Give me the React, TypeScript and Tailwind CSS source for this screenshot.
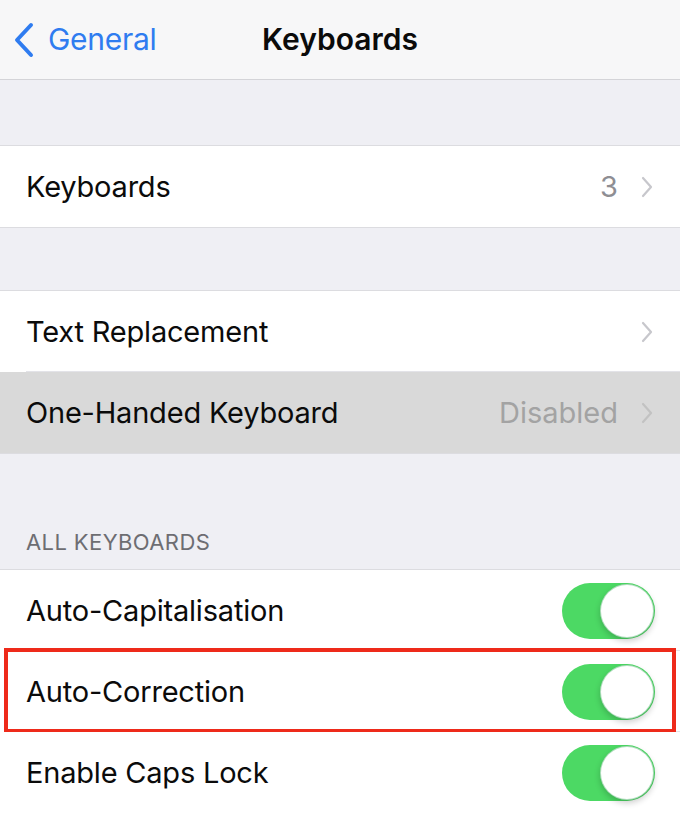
import React from 'react';

function Chevron({ className = '' }: { className?: string }) {
  return (
    <svg width="14" height="24" viewBox="0 0 14 24" className={className} fill="none">
      <path d="M3 3l8 9-8 9" stroke="currentColor" strokeWidth="2.2" strokeLinecap="round" strokeLinejoin="round" />
    </svg>
  );
}

function Toggle() {
  return (
    <div className="relative w-[93px] h-[56px] rounded-full bg-[#4cd964]">
      <div className="absolute right-[1px] top-[1px] w-[54px] h-[54px] rounded-full bg-white border border-[#3aa85a]/40 shadow-[0_3px_6px_rgba(0,0,0,0.2)]" />
    </div>
  );
}

function NavRow({ label, value, highlight, last }: { label: string; value?: string; highlight?: boolean; last?: boolean }) {
  return (
    <div className={`relative flex items-center h-[81px] pl-[26px] pr-[26px] ${highlight ? 'bg-[#d9d9d9]' : 'bg-white'}`}>
      <span className="flex-1 text-[29px] text-[#0b0b0b] tracking-[-0.2px]">{label}</span>
      {value && <span className={`text-[29px] mr-[22px] ${highlight ? 'text-[#a3a3a3]' : 'text-[#8e8e93]'}`}>{value}</span>}
      <Chevron className={highlight ? 'text-[#c2c2c2]' : 'text-[#c7c7cc]'} />
      {!last && !highlight && <div className="absolute bottom-0 left-[26px] right-0 h-px bg-[#e3e3e8]" />}
    </div>
  );
}

function ToggleRow({ label, last }: { label: string; last?: boolean }) {
  return (
    <div className="relative flex items-center h-[81px] pl-[26px] pr-[25px] bg-white">
      <span className="flex-1 text-[29px] text-[#0b0b0b] tracking-[-0.2px]">{label}</span>
      <Toggle />
      {!last && <div className="absolute bottom-0 left-[26px] right-0 h-px bg-[#e3e3e8]" />}
    </div>
  );
}

export default function App() {
  return (
    <div className="w-[680px] h-[813px] overflow-hidden bg-[#efeff4] font-['Inter',sans-serif]">
      <div className="relative flex items-center h-[80px] bg-[#f7f7f8] border-b border-[#d4d4d8]">
        <div className="flex items-center pl-[12px] text-[#2f7cf0]">
          <svg width="24" height="40" viewBox="0 0 24 40" fill="none">
            <path d="M19 5L5 20l14 15" stroke="currentColor" strokeWidth="4" strokeLinecap="round" strokeLinejoin="round" />
          </svg>
          <span className="ml-[12px] text-[30px] tracking-[-0.3px]">General</span>
        </div>
        <div className="absolute left-0 right-0 text-center text-[30px] font-semibold text-[#0b0b0b] pointer-events-none">
          Keyboards
        </div>
      </div>

      <div className="h-[65px]" />
      <div className="border-y border-[#dcdce0]">
        <NavRow label="Keyboards" value="3" last />
      </div>

      <div className="h-[62px]" />
      <div className="border-y border-[#dcdce0]">
        <NavRow label="Text Replacement" />
        <NavRow label="One-Handed Keyboard" value="Disabled" highlight last />
      </div>

      <div className="h-[115px] flex items-end pl-[26px] pb-[10px]">
        <span className="text-[22px] text-[#6d6d72] tracking-[0.4px]">ALL KEYBOARDS</span>
      </div>
      <div className="border-t border-[#dcdce0]">
        <ToggleRow label="Auto-Capitalisation" />
        <div className="relative">
          <ToggleRow label="Auto-Correction" />
          <div className="absolute left-[4px] right-[4px] top-[-3px] bottom-[-1px] border-[4px] border-[#ee2a1a] pointer-events-none" />
        </div>
        <ToggleRow label="Enable Caps Lock" last />
      </div>
    </div>
  );
}
